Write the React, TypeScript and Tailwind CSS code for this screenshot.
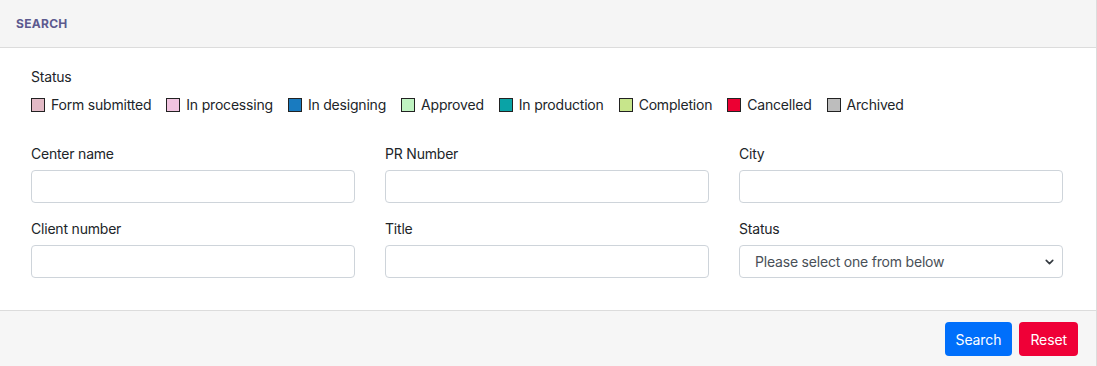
import { ChevronDown } from 'lucide-react';

type Legend = { label: string; color: string };

const legend: Legend[] = [
  { label: 'Form submitted', color: 'bg-[#e2bac6]' },
  { label: 'In processing', color: 'bg-[#f1c4e0]' },
  { label: 'In designing', color: 'bg-[#197bc0]' },
  { label: 'Approved', color: 'bg-[#bff3c1]' },
  { label: 'In production', color: 'bg-[#0aa3a6]' },
  { label: 'Completion', color: 'bg-[#c7e58b]' },
  { label: 'Cancelled', color: 'bg-[#ec0033]' },
  { label: 'Archived', color: 'bg-[#bdbdbd]' },
];

function TextField({ label }: { label: string }) {
  return (
    <div className="flex flex-col">
      <label className="mb-[6px] text-[14px] leading-[21px] text-[#212529]">{label}</label>
      <input
        type="text"
        className="h-[33px] w-full rounded-[4px] border border-[#ced4da] bg-white px-3 text-[14px] outline-none"
      />
    </div>
  );
}

export default function App() {
  return (
    <div
      className="w-[1097px] bg-white border-r border-[#dcdcdc] text-[#212529] tracking-[-0.2px]"
      style={{ fontFamily: 'Inter, "Noto Sans", sans-serif' }}
    >
      <div className="h-[48px] flex items-center pl-4 bg-[#f5f5f5] border-b border-[#dcdcdc]">
        <span className="text-[12px] font-bold tracking-[0.3px] text-[#5c5a8f] uppercase">Search</span>
      </div>

      <div className="pl-[31px] pr-[33px] pt-[18px] pb-[32px]">
        <p className="text-[14px] leading-[21px]">Status</p>
        <div className="mt-[8px] flex items-center h-[20px]">
          {legend.map((item) => (
            <div key={item.label} className="flex items-center mr-[15px]">
              <span className={`w-[14px] h-[14px] border border-[#222] ${item.color} mr-[6px]`} />
              <span className="text-[14px] leading-[20px]">{item.label}</span>
            </div>
          ))}
        </div>

        <div className="mt-[28px] grid grid-cols-3 gap-x-[30px] gap-y-[15px]">
          <TextField label="Center name" />
          <TextField label="PR Number" />
          <TextField label="City" />
          <TextField label="Client number" />
          <TextField label="Title" />
          <div className="flex flex-col">
            <label className="mb-[6px] text-[14px] leading-[21px]">Status</label>
            <div className="relative">
              <select className="h-[33px] w-full appearance-none rounded-[4px] border border-[#ced4da] bg-white pl-[15px] pr-8 text-[14px] text-[#495057] outline-none">
                <option>Please select one from below</option>
              </select>
              <ChevronDown
                className="pointer-events-none absolute right-[7px] top-1/2 -translate-y-1/2 w-[13px] h-[13px] text-[#343a40]"
                strokeWidth={3}
              />
            </div>
          </div>
        </div>
      </div>

      <div className="h-[56px] flex items-start justify-end gap-[7px] pt-[11px] pr-[18px] bg-[#f6f6f6] border-t border-[#dcdcdc]">
        <button className="h-[34px] px-[11px] rounded-[4px] bg-[#006ffb] text-white text-[14px] tracking-[-0.1px]">Search</button>
        <button className="h-[34px] px-[11px] rounded-[4px] bg-[#ef0037] text-white text-[14px] tracking-[-0.1px]">Reset</button>
      </div>
    </div>
  );
}
